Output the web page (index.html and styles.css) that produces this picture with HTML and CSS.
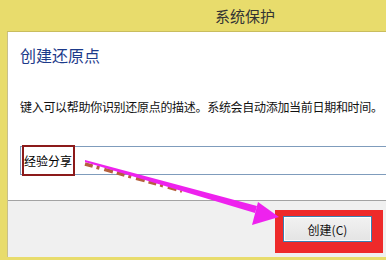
FILE: index.html
```html
<!DOCTYPE html>
<html lang="zh-CN">
<head>
    <meta charset="UTF-8">
    <title>系统保护</title>
    <link rel="stylesheet" href="styles.css">
</head>
<body>
    <div class="window">
        <div class="titlebar">系统保护</div>
        <div class="client">
            <div class="main">
                <h1 class="heading">创建还原点</h1>
                <p class="desc">键入可以帮助你识别还原点的描述。系统会自动添加当前日期和时间。</p>
                <div class="field">
                    <span class="field-text">经验分享</span>
                </div>
            </div>
            <div class="footer">
                <div class="mark">
                    <button class="btn" type="button">创建(C)</button>
                </div>
            </div>
        </div>

        <!-- annotation arrow -->
        <svg class="arrow" width="386" height="260" viewBox="0 0 386 260">
            <line x1="85" y1="164" x2="182" y2="191" stroke="#b5603e" stroke-width="3.5" stroke-dasharray="8 4 3 5 9 4"/>
            <polygon points="85,160 257,206 255,213 85,162" fill="#ee22ee"/>
            <polygon points="258,202 279,217 252,225" fill="#ee22ee"/>
        </svg>
    </div>
</body>
</html>
```

FILE: styles.css
```css
* {
    margin: 0;
    padding: 0;
    box-sizing: border-box;
}

body {
    background: #e8dc6c;
    font-family: "Noto Sans CJK SC", "Noto Sans", sans-serif;
    overflow: hidden;
}

.window {
    position: relative;
    width: 386px;
    height: 260px;
    display: flex;
    flex-direction: column;
    padding-left: 7px;
    padding-bottom: 3px;
    background: #e8dc6c;
}

.titlebar {
    height: 32px;
    padding-left: 97px;
    display: flex;
    align-items: center;
    justify-content: center;
    font-size: 15px;
    color: #333;
    border-bottom: 1px solid #c9bd5e;
}

.client {
    flex: 1;
    display: flex;
    flex-direction: column;
    background: #fff;
    border-left: 1px solid #c8c08a;
    overflow: hidden;
}

.main {
    flex: 1;
    padding: 13px 0 0 12px;
}

.heading {
    font-size: 16px;
    font-weight: normal;
    line-height: 20px;
    color: #1c3a8a;
}

.desc {
    margin-top: 34px;
    font-size: 12px;
    letter-spacing: -0.3px;
    line-height: 16px;
    color: #111;
    white-space: nowrap;
}

.field {
    margin-top: 31px;
    margin-right: -4px;
    height: 29px;
    border: 1px solid #7f9cbc;
    border-right: none;
    display: flex;
    align-items: stretch;
}

.field-text {
    margin: -2px 0 -2px 1px;
    padding: 0 1px 0 0;
    border: 2px solid #8c1a1a;
    display: flex;
    align-items: center;
    font-size: 12px;
    color: #000;
}

.footer {
    height: 57px;
    background: #f0f0f0;
    border-top: 1px solid #a3a3a3;
    display: flex;
    justify-content: flex-end;
    align-items: flex-start;
    padding: 9px 3px 0 0;
}

.mark {
    background: #ee2a2a;
    padding: 6px 11px 11px 8px;
}

.btn {
    display: block;
    width: 89px;
    height: 26px;
    border: 1px solid #3c7fb1;
    background: linear-gradient(#f2f2f2, #e4e4e4);
    box-shadow: inset 0 0 0 1px #fff;
    font-family: "Noto Sans CJK SC", "Noto Sans", sans-serif;
    font-size: 12px;
    color: #111;
}

.arrow {
    position: absolute;
    left: 0;
    top: 0;
    pointer-events: none;
}
```
